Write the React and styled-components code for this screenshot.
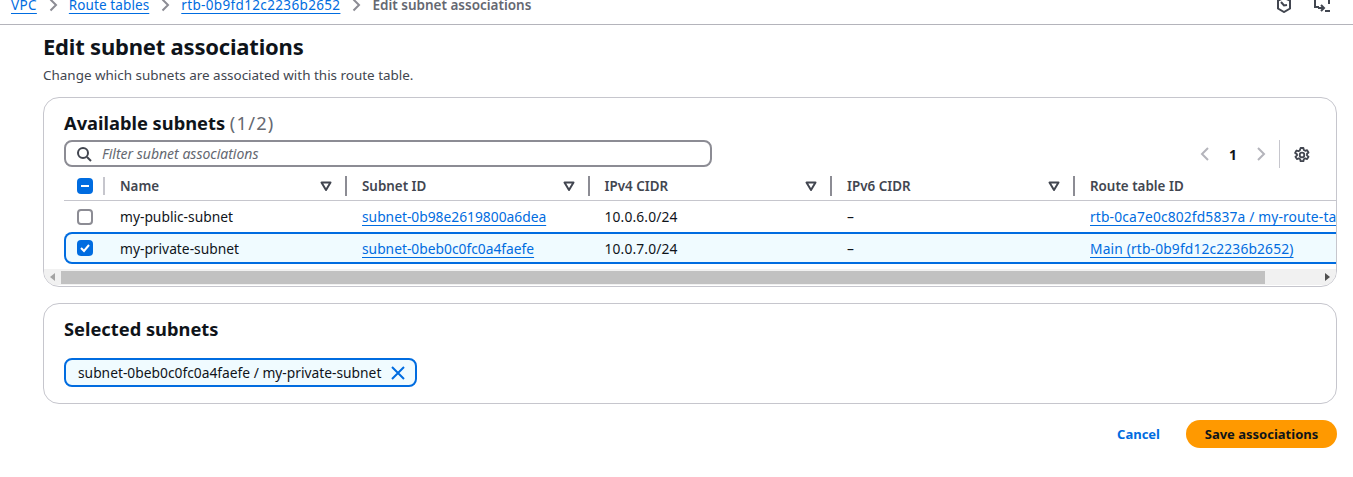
import React from 'react';
import styled, { createGlobalStyle } from 'styled-components';

const Global = createGlobalStyle`
  html, body { margin: 0; padding: 0; background: #fff; overflow: hidden; }
  body { font-family: "Noto Sans", "Open Sans", sans-serif; color: #0f141a; font-size: 13.8px; }
`;

const Page = styled.div`
  width: 1353px;
  height: 477px;
  overflow: hidden;
`;

const TopBar = styled.header`
  height: 25px;
  box-sizing: border-box;
  border-bottom: 1px solid #b4b4bb;
  padding: 0 23px 0 11px;
  display: flex;
  align-items: flex-end;
  justify-content: space-between;
  overflow: hidden;
`;

const Crumbs = styled.nav`
  display: flex;
  align-items: center;
  gap: 8px;
  height: 18px;
  margin-bottom: 10px;
  font-size: 13.5px;
  line-height: 18px;
`;

const CrumbLink = styled.a`
  color: #006ce0;
  text-decoration: underline;
  text-underline-offset: 3px;
  letter-spacing: ${p => (p.$id ? '0.35px' : '0.1px')};
`;

const CrumbCurrent = styled.span`
  color: #656871;
  font-weight: 600;
`;

const TopIcons = styled.div`
  display: flex;
  gap: 23px;
  margin-bottom: 11px;
  color: #424650;
`;

const Content = styled.main`
  padding: 0 16px 0 43px;
`;

const Title = styled.h1`
  margin: 6px 0 0;
  font-size: 22px;
  line-height: 30px;
  font-weight: 700;
  letter-spacing: -0.2px;
`;

const Subtitle = styled.p`
  margin: 5px 0 0;
  font-size: 13.45px;
  line-height: 18px;
  color: #424650;
`;

const Panel = styled.section`
  margin-top: ${p => p.$top}px;
  height: ${p => p.$height}px;
  box-sizing: border-box;
  border: 1px solid #c6c6cd;
  border-radius: 16px;
  overflow: hidden;
  display: flex;
  flex-direction: column;
`;

const PanelHead = styled.h2`
  margin: 0;
  padding: 13px 20px 0;
  font-size: 18.3px;
  line-height: 24px;
  font-weight: 700;
`;

const Count = styled.span`
  color: #656871;
  font-weight: 400;
  letter-spacing: 1.2px;
`;

const ToolRow = styled.div`
  display: flex;
  align-items: center;
  justify-content: space-between;
  padding: 5px 20px 0;
`;

const Filter = styled.div`
  width: 648px;
  height: 27px;
  align-self: flex-start;
  box-sizing: border-box;
  border: 2px solid #8c8c94;
  border-radius: 8px;
  display: flex;
  align-items: center;
  gap: 10px;
  padding-left: 10px;
  color: #656871;
  font-style: italic;
  font-size: 14px;
`;

const Pager = styled.div`
  display: flex;
  align-items: center;
  color: #b4b4bb;
`;

const PageNum = styled.span`
  width: 40px;
  text-align: center;
  color: #0f141a;
  font-weight: 700;
  font-size: 13.8px;
`;

const PagerDivider = styled.span`
  width: 1px;
  height: 28px;
  background: #c6c6cd;
  margin: 0 14px 0 10px;
`;

const Gear = styled.span`
  display: flex;
  color: #424650;
  margin: 1px 6px 0 0;
`;

const TableWrap = styled.div`
  overflow: hidden;
  margin-top: 4px;
  height: 92px;
`;

const columns = '41px 242px 242.5px 242.5px 243px 500px';

const HeaderRow = styled.div`
  display: grid;
  grid-template-columns: ${columns};
  height: 29px;
  box-sizing: border-box;
  border-bottom: 1px solid #c6c6cd;
  margin-left: 20px;
  align-items: center;
`;

const HeadCell = styled.div`
  height: 20px;
  display: flex;
  align-items: center;
  justify-content: space-between;
  font-weight: 600;
  font-size: 13.4px;
  color: #424650;
  padding: 0 13px 0 15px;
  box-sizing: border-box;
  border-right: 2px solid #8c8c94;
  &:last-child { border-right: 0; }
`;

const CheckCell = styled.div`
  display: flex;
  align-items: center;
  padding-left: 13px;
  height: 20px;
`;

const CheckHead = styled(CheckCell)`
  justify-content: space-between;
  &::after {
    content: '';
    width: 2px;
    height: 18px;
    background: #c6c6cd;
  }
`;

const Row = styled.div`
  display: grid;
  grid-template-columns: ${columns};
  align-items: center;
  width: 1800px;
  height: ${p => (p.$selected ? 32 : 31)}px;
  margin-left: 20px;
  ${p => p.$selected && `
    background: #f0fbff;
    box-shadow: inset 0 0 0 2px #006ce0;
    border-radius: 8px;
  `}
`;

const Cell = styled.div`
  padding-left: 15px;
  white-space: nowrap;
  letter-spacing: ${p => (p.$digits ? '0.15px' : '0')};
`;

const TableLink = styled.a`
  color: #006ce0;
  text-decoration: underline;
  text-underline-offset: 3px;
`;

const Box = styled.span`
  width: 16px;
  height: 16px;
  box-sizing: border-box;
  border-radius: 4px;
  display: flex;
  align-items: center;
  justify-content: center;
  background: ${p => (p.$on ? '#006ce0' : '#fff')};
  border: ${p => (p.$on ? '0' : '2px solid #8c8c94')};
`;

const ScrollBar = styled.div`
  height: 16px;
  margin-top: 5px;
  background: #f1f1f1;
  display: flex;
  align-items: center;
  justify-content: space-between;
  position: relative;
  padding: 0 6px;
`;

const Thumb = styled.div`
  position: absolute;
  left: 17px;
  width: 1204px;
  top: 2px;
  height: 13px;
  background: #c1c1c1;
`;

const Arrow = styled.span`
  width: 0;
  height: 0;
  border-top: 4px solid transparent;
  border-bottom: 4px solid transparent;
  ${p => (p.$right ? 'border-left: 5px solid #505050;' : 'border-right: 5px solid #a3a3a3;')}
`;

const Token = styled.div`
  margin: 17px 0 0 20px;
  width: fit-content;
  height: 29px;
  box-sizing: border-box;
  border: 2px solid #006ce0;
  border-radius: 8px;
  background: #f0fbff;
  display: flex;
  align-items: center;
  gap: 9px;
  padding: 0 9px 0 12px;
  white-space: nowrap;
`;

const Footer = styled.div`
  margin-top: 16px;
  display: flex;
  justify-content: flex-end;
  align-items: center;
  gap: 26px;
`;

const TextButton = styled.span`
  color: #006ce0;
  font-weight: 700;
  font-size: 13px;
`;

const PrimaryButton = styled.span`
  height: 28px;
  width: 151px;
  border-radius: 14px;
  background: #ff9900;
  color: #0f141a;
  font-weight: 700;
  font-size: 13px;
  display: flex;
  align-items: center;
  justify-content: center;
`;

const Sep = () => (
  <svg width="16" height="16" viewBox="0 0 16 16" fill="none" stroke="#8c8c94" strokeWidth="2">
    <path d="M5.5 2.5 11 8l-5.5 5.5" />
  </svg>
);

const SortIcon = () => (
  <svg width="12" height="12" viewBox="0 0 12 12" fill="none" stroke="#424650" strokeWidth="2" strokeLinejoin="round">
    <path d="M1.5 2.5h9L6 10z" />
  </svg>
);

const headers = ['Name', 'Subnet ID', 'IPv4 CIDR', 'IPv6 CIDR', 'Route table ID'];

const rows = [
  {
    name: 'my-public-subnet',
    subnet: 'subnet-0b98e2619800a6dea',
    cidr: '10.0.6.0/24',
    route: 'rtb-0ca7e0c802fd5837a / my-route-table',
  },
  {
    name: 'my-private-subnet',
    subnet: 'subnet-0beb0c0fc0a4faefe',
    cidr: '10.0.7.0/24',
    route: 'Main (rtb-0b9fd12c2236b2652)',
    selected: true,
  },
];

export default function App() {
  return (
    <Page>
      <Global />
      <TopBar>
        <Crumbs>
          <CrumbLink $id>VPC</CrumbLink>
          <Sep />
          <CrumbLink>Route tables</CrumbLink>
          <Sep />
          <CrumbLink $id>rtb-0b9fd12c2236b2652</CrumbLink>
          <Sep />
          <CrumbCurrent>Edit subnet associations</CrumbCurrent>
        </Crumbs>
        <TopIcons>
          <svg width="14" height="16" viewBox="0 0 14 16" fill="none" stroke="currentColor" strokeWidth="2">
            <path d="M7 1 13 3.500v8L7 15l-6-3.500v-8z" />
            <path d="M4 5l3 3.500 3-.5" />
          </svg>
          <svg width="16" height="16" viewBox="0 0 16 16" fill="none" stroke="currentColor" strokeWidth="2">
            <path d="M1 1v9h4M1 1h14v6M4 11h6M7 8l3 3-3 3M11 14h5" />
          </svg>
        </TopIcons>
      </TopBar>
      <Content>
        <Title>Edit subnet associations</Title>
        <Subtitle>Change which subnets are associated with this route table.</Subtitle>
        <Panel $top={13} $height={190}>
          <PanelHead>
            Available subnets <Count>(1/2)</Count>
          </PanelHead>
          <ToolRow>
            <Filter>
              <svg width="16" height="16" viewBox="0 0 16 16" fill="none" stroke="#424650" strokeWidth="2">
                <circle cx="7" cy="7" r="5" />
                <path d="m11 11 4 4" />
              </svg>
              Filter subnet associations
            </Filter>
            <Pager>
              <svg width="16" height="16" viewBox="0 0 16 16" fill="none" stroke="currentColor" strokeWidth="2">
                <path d="M11 2 5 8l6 6" />
              </svg>
              <PageNum>1</PageNum>
              <svg width="16" height="16" viewBox="0 0 16 16" fill="none" stroke="currentColor" strokeWidth="2">
                <path d="m5 2 6 6-6 6" />
              </svg>
              <PagerDivider />
              <Gear>
                <svg width="16" height="16" viewBox="0 0 16 16" fill="none" stroke="currentColor" strokeWidth="1.800" strokeLinejoin="round">
                  <circle cx="8" cy="8" r="2.300" />
                  <path d="M6.600 1h2.800l.4 2 1.400.8 1.900-.7 1.400 2.400-1.500 1.300v1.600l1.500 1.300-1.400 2.400-1.900-.7-1.400.8-.4 2H6.600l-.4-2-1.400-.8-1.900.7-1.400-2.400 1.500-1.300V7.200L1.100 5.900l1.400-2.400 1.900.7 1.400-.8z" />
                </svg>
              </Gear>
            </Pager>
          </ToolRow>
          <TableWrap>
            <HeaderRow>
              <CheckHead>
                <Box $on>
                  <svg width="10" height="10" viewBox="0 0 10 10" stroke="#fff" strokeWidth="2">
                    <path d="M1 5h8" />
                  </svg>
                </Box>
              </CheckHead>
              {headers.map(h => (
                <HeadCell key={h}>
                  {h}
                  {h !== 'Route table ID' && <SortIcon />}
                </HeadCell>
              ))}
            </HeaderRow>
            {rows.map(r => (
              <Row key={r.name} $selected={r.selected}>
                <CheckCell>
                  <Box $on={r.selected}>
                    {r.selected && (
                      <svg width="12" height="12" viewBox="0 0 12 12" fill="none" stroke="#fff" strokeWidth="2">
                        <path d="m2 6 3 3 5-6" />
                      </svg>
                    )}
                  </Box>
                </CheckCell>
                <Cell>{r.name}</Cell>
                <Cell><TableLink>{r.subnet}</TableLink></Cell>
                <Cell $digits>{r.cidr}</Cell>
                <Cell>–</Cell>
                <Cell $digits><TableLink>{r.route}</TableLink></Cell>
              </Row>
            ))}
          </TableWrap>
          <ScrollBar>
            <Arrow />
            <Thumb />
            <Arrow $right />
          </ScrollBar>
        </Panel>
        <Panel $top={16} $height={101}>
          <PanelHead>Selected subnets</PanelHead>
          <Token>
            subnet-0beb0c0fc0a4faefe / my-private-subnet
            <svg width="16" height="16" viewBox="0 0 16 16" fill="none" stroke="#006ce0" strokeWidth="2">
              <path d="m2 2 12 12M14 2 2 14" />
            </svg>
          </Token>
        </Panel>
        <Footer>
          <TextButton>Cancel</TextButton>
          <PrimaryButton>Save associations</PrimaryButton>
        </Footer>
      </Content>
    </Page>
  );
}
